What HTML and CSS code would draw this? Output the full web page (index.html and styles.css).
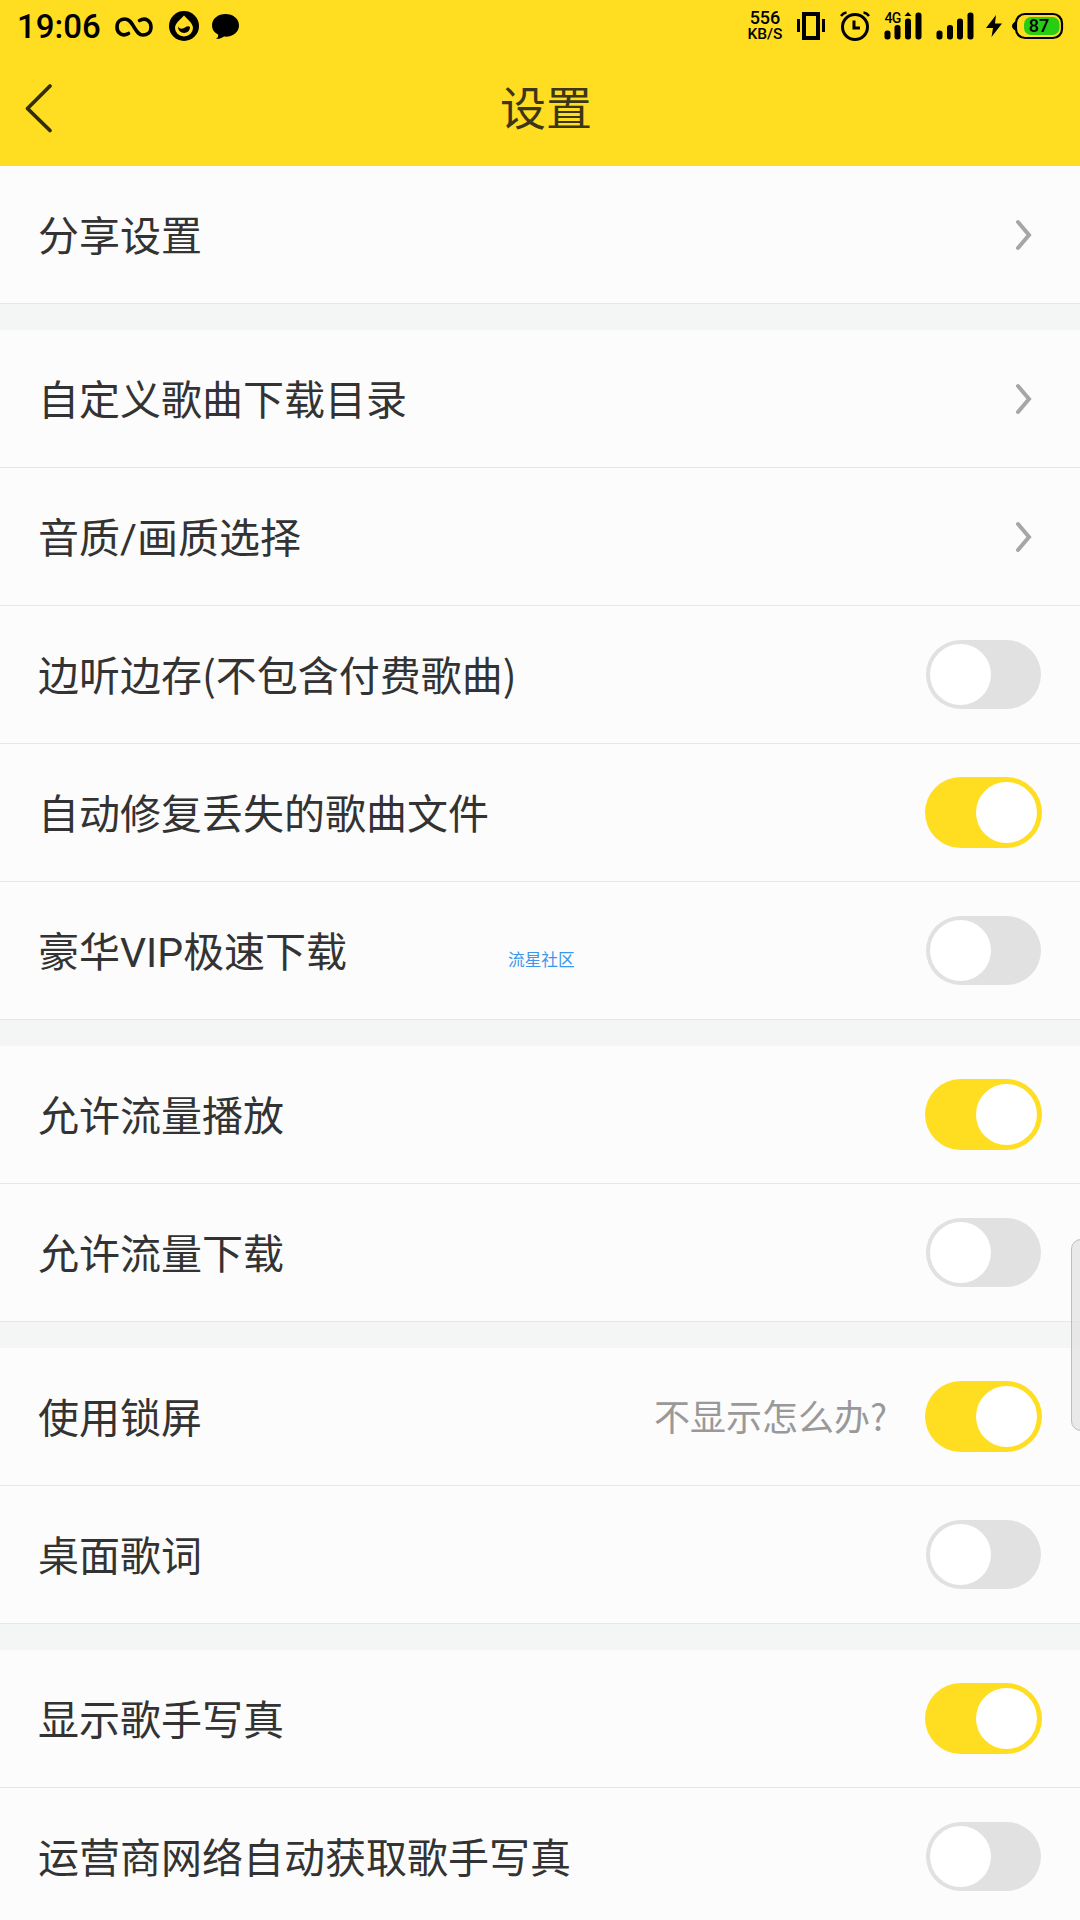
FILE: index.html
```html
<!DOCTYPE html>
<html lang="zh-CN">
<head>
    <meta charset="utf-8">
    <title>设置</title>
    <link rel="stylesheet" href="styles.css">
</head>
<body>
    <div class="top">
        <div class="status">    <!-- 状态栏 -->
            <span class="time">19:06</span>
            <svg class="ic-inf" width="38" height="20" viewBox="0 0 38 20" fill="none" stroke="#000" stroke-width="3.6" stroke-linecap="round">
                <path d="M13.500 16.500C7 20 2 16 2 10C2 4.500 6 2 10 2C14.500 2 16.500 6 19 10C21.500 14 23.500 18 28 18C32 18 36 15.500 36 10C36 4 31 0 24.500 3.500"/>
            </svg>
            <svg class="ic-drop" width="30" height="30" viewBox="0 0 30 30">
                <circle cx="15" cy="15" r="15"/>
                <path d="M15 4.500C18 8 24 12 24 17A9 8.500 0 0 1 6 17C6 12 12 8 15 4.500Z" fill="#ffde22"/>
                <path d="M9 15.500C11 18.500 14 18 16 16.500C18 15 20 15 21 16C21 24 9 24 9 15.500Z"/>
            </svg>
            <svg class="ic-msg" width="27" height="25" viewBox="0 0 27 25">
                <path d="M13.500 0C21 0 27 4.500 27 11.500C27 18.500 20 23.500 12 22.500C9 24.500 7 25 4 24.700C6 23.500 6.500 22.500 6 20.500C2 18.500 0 15.500 0 11.500C0 4.500 6 0 13.500 0Z"/>
            </svg>
            <div class="speed">556<br>KB/S</div>
            <svg class="ic-vib" width="28" height="28" viewBox="0 0 28 28">
                <rect x="7" y="2" width="14" height="24" fill="none" stroke="#000" stroke-width="4"/>
                <rect x="0" y="7" width="3" height="13"/>
                <rect x="25" y="7" width="3" height="13"/>
            </svg>
            <svg class="ic-alarm" width="30" height="30" viewBox="0 0 30 30" fill="none" stroke="#000">
                <circle cx="15" cy="16" r="12.500" stroke-width="3"/>
                <path d="M14 9.500V17H20" stroke-width="3"/>
                <path d="M1 5Q3 2 6.500 1.500M29 5Q27 2 23.500 1.500" stroke-width="2.400"/>
            </svg>
            <svg class="ic-sig" width="38" height="28" viewBox="0 0 38 28">
                <text class="g4" x="0.500" y="11">4G</text>
                <rect x="0.500" y="18.500" width="6" height="9" rx="2.700"/>
                <rect x="10.500" y="13" width="6" height="14.500" rx="2.700"/>
                <rect x="21" y="6.500" width="6" height="21" rx="2.700"/>
                <path d="M20.500 4L24 0L27.500 4Z"/>
                <rect x="31.500" y="0.500" width="6" height="27" rx="2.700"/>
            </svg>
            <svg class="ic-sig2" width="38" height="28" viewBox="0 0 38 28">
                <rect x="0.500" y="18.500" width="6" height="9" rx="2.700"/>
                <rect x="11" y="13" width="6" height="14.500" rx="2.700"/>
                <rect x="21" y="6.500" width="6" height="21" rx="2.700"/>
                <rect x="31.500" y="0.500" width="6" height="27" rx="2.700"/>
            </svg>
            <svg class="ic-bolt" width="16" height="22" viewBox="0 0 16 22">
                <path d="M10 0L0 13H7L5.500 22L16 8.500H9Z"/>
            </svg>
            <svg class="ic-bat" width="52" height="26" viewBox="0 0 52 26">
                <path d="M5 7.500Q0 10 0 13Q0 16 5 18.500Z"/>
                <rect x="4" y="1" width="46" height="24" rx="9" fill="none" stroke="#000" stroke-width="2.200"/>
                <rect x="12" y="4" width="35.500" height="18" rx="7" fill="#28cc12"/>
                <text class="bat" x="27" y="19" text-anchor="middle">87</text>
            </svg>
        </div>
        <div class="nav">   <!-- 标题 -->
            <svg class="back" width="28" height="50" viewBox="0 0 28 50">
                <path d="M25 3L2.500 25.500L25 47.500" fill="none" stroke="#332d10" stroke-width="3.800" stroke-linecap="round" stroke-linejoin="round"/>
            </svg>
            <div class="title">设置</div>
        </div>
    </div>

    <div class="group">
        <div class="row"><span class="name">分享设置</span><svg class="arrow" viewBox="0 0 16 30"><path d="M2 2L13 15L2 28"/></svg></div>
    </div>
    <div class="group">     <!-- 下载 -->
        <div class="row"><span class="name">自定义歌曲下载目录</span><svg class="arrow" viewBox="0 0 16 30"><path d="M2 2L13 15L2 28"/></svg></div>
        <div class="row"><span class="name">音质<span class="en">/</span>画质选择</span><svg class="arrow" viewBox="0 0 16 30"><path d="M2 2L13 15L2 28"/></svg></div>
        <div class="row"><span class="name">边听边存(不包含付费歌曲)</span><div class="switch"></div></div>
        <div class="row"><span class="name">自动修复丢失的歌曲文件</span><div class="switch on"></div></div>
        <div class="row"><span class="name">豪华<span class="en">VIP</span>极速下载</span><div class="switch"></div></div>
    </div>
    <div class="group">     <!-- 流量 -->
        <div class="row"><span class="name">允许流量播放</span><div class="switch on"></div></div>
        <div class="row"><span class="name">允许流量下载</span><div class="switch"></div></div>
    </div>
    <div class="group">     <!-- 锁屏 -->
        <div class="row"><span class="name">使用锁屏</span><span class="tip">不显示怎么办?</span><div class="switch on"></div></div>
        <div class="row"><span class="name">桌面歌词</span><div class="switch"></div></div>
    </div>
    <div class="group">     <!-- 写真 -->
        <div class="row"><span class="name">显示歌手写真</span><div class="switch on"></div></div>
        <div class="row"><span class="name">运营商网络自动获取歌手写真</span><div class="switch"></div></div>
    </div>

    <div class="mark">流星社区</div>
    <div class="handle"></div>
</body>
</html>
```
FILE: styles.css
```css
* {
    box-sizing: border-box;
}
body {
    margin: 0;
    width: 1080px;
    height: 1920px;
    overflow: hidden;
    position: relative;
    background-color: #f4f6f6;
    color: #333;
    font-family: "Noto Sans CJK SC", sans-serif;
}
svg {
    display: block;
    flex: none;
    overflow: visible;
}
.top {
    height: 166px;
    background-color: #ffde22;
}
.status {
    height: 52px;
    padding-left: 17px;
    display: flex;
    align-items: center;
    color: #000;
    font-family: Roboto, sans-serif;
}
.time {
    width: 98px;
    font-size: 33px;
    font-weight: 500;
    line-height: 52px;
    padding-top: 1px;
}
.ic-inf {
    margin-top: 2px;
}
.ic-drop {
    margin-left: 16px;
}
.ic-msg {
    margin-left: 13px;
}
.speed {
    width: 40px;
    margin-left: 506px;
    text-align: center;
    font-weight: 500;
    font-size: 15.5px;
    line-height: 16px;
}
.speed::first-line {
    font-size: 18px;
}
.ic-vib {
    margin-left: 12px;
}
.ic-alarm {
    margin-left: 15px;
}
.ic-sig {
    margin-left: 14px;
}
.ic-sig2 {
    margin-left: 14px;
}
.ic-bolt {
    margin-left: 12px;
}
.ic-bat {
    margin-left: 10px;
}
.g4 {
    font-size: 14px;
    font-weight: 500;
    letter-spacing: -0.8px;
}
.bat {
    font-size: 18px;
    font-weight: 500;
}
.nav {
    height: 114px;
    padding-left: 25px;
    display: flex;
    align-items: center;
}
.back {
    margin-bottom: 2px;
}
.title {
    flex: 1;
    padding-right: 41px;
    margin-bottom: 8px;
    font-size: 46px;
    line-height: 60px;
    text-align: center;
    color: #3d3616;
}
.group {
    margin-bottom: 26px;
    background-color: #fcfcfc;
}
.row {
    height: 138px;
    padding: 0 38px;
    border-bottom: 1px solid #e5e7e7;
    display: flex;
    align-items: center;
    font-size: 41px;
    line-height: 60px;
}
.name {
    padding-bottom: 4px;
}
.en {
    font-family: Roboto, sans-serif;
    line-height: 1;
}
.arrow {
    width: 16px;
    height: 30px;
    margin-left: auto;
    margin-right: 10px;
    fill: none;
    stroke: #a6a6a6;
    stroke-width: 4;
    stroke-linecap: round;
}
.tip {
    margin-left: auto;
    padding-bottom: 3px;
    font-size: 36px;
    color: #999;
}
.switch {
    width: 115px;
    height: 69px;
    padding: 4px;
    margin-left: auto;
    margin-right: 1px;
    border-radius: 35px;
    background-color: #e1e1e1;
    display: flex;
}
.switch::after {
    content: "";
    width: 61px;
    height: 61px;
    border-radius: 50%;
    background-color: #fff;
}
.switch.on {
    width: 117px;
    height: 71px;
    padding: 5px;
    margin-right: 0;
    border-radius: 36px;
    background-color: #ffde22;
    justify-content: flex-end;
}
.tip + .switch {
    margin-left: 38px;
}
.mark {
    position: absolute;
    left: 508px;
    top: 947px;
    font-size: 16.7px;
    line-height: 24px;
    color: #3b97ee;
}
.handle {
    position: absolute;
    left: 1071px;
    top: 1239px;
    width: 20px;
    height: 192px;
    border: 1px solid #bdbdbd;
    border-radius: 10px;
    background-color: rgba(225, 225, 225, 0.7);
}
```
